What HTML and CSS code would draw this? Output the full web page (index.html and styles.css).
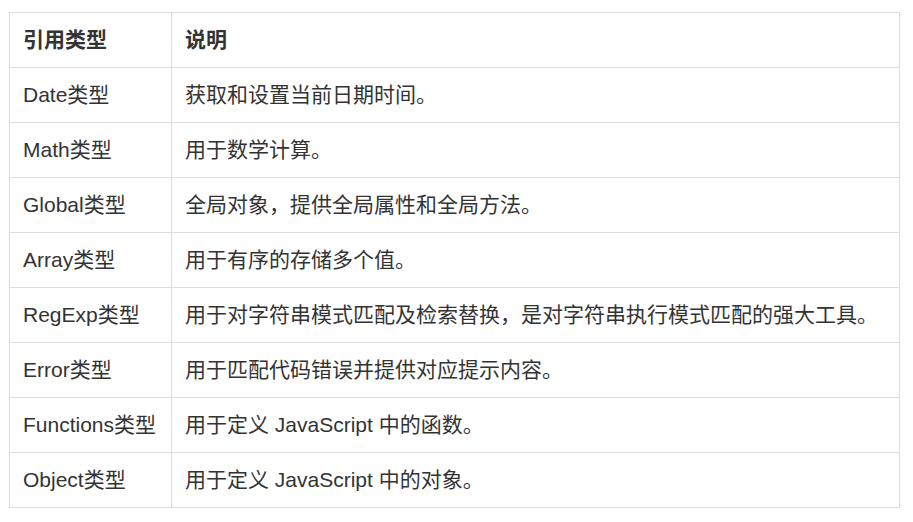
FILE: index.html
```html
<!DOCTYPE html>
<html lang="zh-CN">
<head>
<meta charset="utf-8">
<title>引用类型</title>
<link rel="stylesheet" href="styles.css">
</head>
<body>
<table class="ref-table">
  <thead>
    <tr><th class="col-type">引用类型</th><th>说明</th></tr>
  </thead>
  <tbody>
    <tr><td>Date类型</td><td>获取和设置当前日期时间。</td></tr>
    <tr><td>Math类型</td><td>用于数学计算。</td></tr>
    <tr><td>Global类型</td><td>全局对象，提供全局属性和全局方法。</td></tr>
    <tr><td>Array类型</td><td>用于有序的存储多个值。</td></tr>
    <tr><td>RegExp类型</td><td>用于对字符串模式匹配及检索替换，是对字符串执行模式匹配的强大工具。</td></tr>
    <tr><td>Error类型</td><td>用于匹配代码错误并提供对应提示内容。</td></tr>
    <tr><td>Functions类型</td><td>用于定义 JavaScript 中的函数。</td></tr>
    <tr><td>Object类型</td><td>用于定义 JavaScript 中的对象。</td></tr>
  </tbody>
</table>
</body>
</html>
```
FILE: styles.css
```css
html, body {
  margin: 0;
  padding: 0;
  background: #fff;
}
body {
  padding: 12px 0 0 9px;
  font-family: "Liberation Sans", Arial, "Noto Sans CJK SC", sans-serif;
  color: #333;
}
.ref-table {
  border-collapse: collapse;
  width: 891px;
  font-size: 21px;
}
.ref-table th,
.ref-table td {
  border: 1px solid #ddd;
  height: 55px;
  padding: 0 8px 0 13px;
  text-align: left;
  vertical-align: middle;
  box-sizing: border-box;
  line-height: 1.4;
  white-space: nowrap;
}
.ref-table th {
  font-weight: bold;
}
.ref-table .col-type {
  width: 162px;
}
```
